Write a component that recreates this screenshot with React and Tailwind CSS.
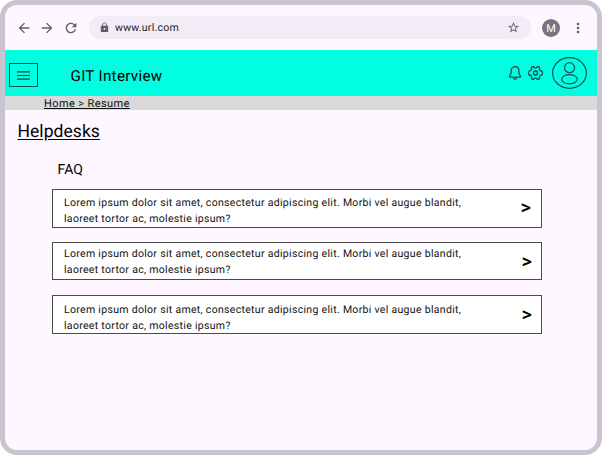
import { MdArrowBack, MdArrowForward, MdRefresh, MdLock, MdStarBorder, MdMoreVert } from "react-icons/md";

function BrowserBar() {
  return (
    <div className="flex h-[45px] shrink-0 items-center pl-[11px] text-[#615d66]">
      <MdArrowBack size={16} />
      <MdArrowForward size={16} className="ml-[7px]" />
      <MdRefresh size={16} className="ml-[8px]" />
      <div className="ml-[10px] flex h-[23px] w-[442px] items-center rounded-full bg-[#f2ecf7] pl-[10px] pr-[11px]">
        <MdLock size={11} />
        <span className="ml-[5px] text-[10.6px] leading-4 tracking-[0.2px] text-[#1d1b20]">www.url.com</span>
        <MdStarBorder size={13} className="ml-auto" />
      </div>
      <div className="ml-[11px] flex size-[18px] items-center justify-center rounded-full bg-[#79747e] pt-px text-[11px] leading-none text-white">M</div>
      <MdMoreVert size={16} className="ml-[10px]" />
    </div>
  );
}

function Header() {
  return (
    <header className="flex h-[46px] shrink-0 items-center bg-[#00ffe1]">
      <button className="ml-[4px] mt-[4px] flex h-6 w-[29px] items-center justify-center border border-[#0b4f4a]">
        <svg width="13" height="9" viewBox="0 0 13 9" fill="none" stroke="#124b48" strokeWidth="1.2">
          <path d="M0 .8h13M0 4.5h13M0 8.2h13" />
        </svg>
      </button>
      <h1 className="ml-[32.5px] mt-[5px] text-[15.2px] leading-5 tracking-[0.3px] text-black">GIT Interview</h1>
      <div className="ml-auto mr-[10px] flex items-center">
        <svg width="12" height="14" viewBox="0 0 12 14" fill="none" stroke="#12514d" strokeWidth="1.3" strokeLinejoin="round">
          <path d="M6 .7C3.6.7 2.1 2.5 2.1 4.8v2.4L.6 10v1.1h10.8V10L9.9 7.2V4.8C9.9 2.5 8.400 .7 6 .7Z" />
          <path d="M4.200 11.300c.2 1.200.9 1.900 1.800 1.900s1.600-.7 1.800-1.900" />
        </svg>
        <svg className="ml-[7px]" width="15" height="14" viewBox="0 0 15 14" fill="none" stroke="#12514d" strokeWidth="1.3" strokeLinejoin="round">
          <path d="M4.300.7h1.500c.2 1 .8 1.400 1.700 1.400S9 1.700 9.200.7h1.500l1 1.700c-.6.900-.3 2.100.8 2.400.5.200 1 .1 1.200 0l.8 1.500v1.400l-.8 1.500c-1-.2-1.900.3-2.100 1.100-.1.500-.1.900.1 1.300l-1 1.700H9.200c-.2-1-.8-1.400-1.700-1.400s-1.500.4-1.700 1.400H4.300l-1-1.700c.6-.9.300-2.100-.8-2.400-.5-.2-1-.1-1.200 0L.5 7.700V6.300l.8-1.500c1 .2 1.900-.3 2.100-1.100.1-.5.1-.9-.1-1.300Z" />
          <circle cx="7.500" cy="7" r="2" />
        </svg>
        <svg className="ml-[9px]" width="35" height="32" viewBox="0 0 35 32" fill="none" stroke="#12514d" strokeWidth="1.200">
          <ellipse cx="17.500" cy="16" rx="16.900" ry="15.300" />
          <circle cx="17.500" cy="10.700" r="5" />
          <ellipse cx="17.500" cy="22.300" rx="7.800" ry="4.600" />
        </svg>
      </div>
    </header>
  );
}

function Question({ className, arrowClassName }) {
  return (
    <div className={`ml-[47px] flex w-[490px] border border-[#4a4a4a] bg-white ${className}`}>
      <p className="ml-[11px] whitespace-nowrap text-[10.5px] leading-[15.6px] tracking-[0.31px] text-[#111]">
        Lorem ipsum dolor sit amet, consectetur adipiscing elit. Morbi vel augue blandit,<br />
        laoreet tortor ac, molestie ipsum?
      </p>
      <span className={`ml-auto text-[20px] font-medium text-black ${arrowClassName}`}>&gt;</span>
    </div>
  );
}

export default function App() {
  return (
    <div className="h-[455px] w-[602px] bg-white font-['Roboto',sans-serif] [text-rendering:geometricPrecision]">
      <div className="flex h-full flex-col overflow-hidden rounded-[17px] border-[5px] border-[#cac4d0] bg-[#fef7ff]">
        <BrowserBar />
        <Header />
        <nav className="h-[14px] shrink-0 bg-[#d9d9d9] pl-[39px] text-[11px] leading-[15px] tracking-[0.4px] text-[#111] underline">Home &gt; Resume</nav>
        <main className="flex flex-col items-start text-black">
          <h2 className="ml-[12.5px] mt-[12px] text-[17.5px] leading-5 tracking-[0.05px] underline underline-offset-2">Helpdesks</h2>
          <h3 className="ml-[52.5px] mt-[18px] text-[14px] leading-5 tracking-[0.1px]">FAQ</h3>
          <Question className="mt-[9px] h-[39px] pt-[5px]" arrowClassName="mr-[10px] leading-[24px]" />
          <Question className="mt-[14px] h-[38px] pt-[3px]" arrowClassName="mr-[9px] leading-[31px]" />
          <Question className="mt-[15px] h-[39px] pt-[6px]" arrowClassName="mr-[9px] leading-[25px]" />
        </main>
      </div>
    </div>
  );
}
